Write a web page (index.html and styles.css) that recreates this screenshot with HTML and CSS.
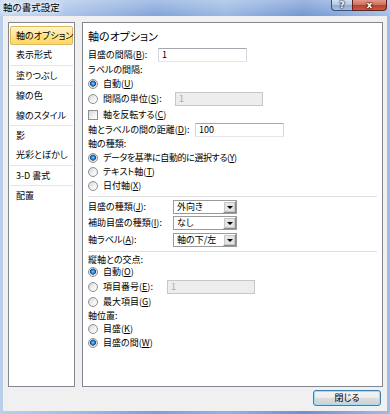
FILE: index.html
```html
<!DOCTYPE html>
<html lang="ja">
<head>
    <meta charset="UTF-8">
    <title>軸の書式設定</title>
    <link rel="stylesheet" href="styles.css">
</head>
<body>

<div class="window">
    <div class="titlebar">
        <span class="title">軸の書式設定</span>
        <div class="caption-buttons">
            <span class="cap-btn help">?</span>
            <span class="cap-btn close">x</span>
        </div>
    </div>

    <div class="client">
        <div class="panes">
            <ul class="nav">
                <li class="nav-item selected">軸のオプション</li>
                <li class="nav-item">表示形式</li>
                <li class="nav-sep"></li>
                <li class="nav-item">塗りつぶし</li>
                <li class="nav-sep"></li>
                <li class="nav-item">線の色</li>
                <li class="nav-item">線のスタイル</li>
                <li class="nav-sep"></li>
                <li class="nav-item">影</li>
                <li class="nav-item">光彩とぼかし</li>
                <li class="nav-sep"></li>
                <li class="nav-item">3-D 書式</li>
                <li class="nav-sep"></li>
                <li class="nav-item">配置</li>
            </ul>

            <div class="options">
                <div class="opt-title">軸のオプション</div>

                <div class="row">
                    <span class="lbl w-interval">目盛の間隔(<u>B</u>):</span>
                    <span class="textbox">1</span>
                </div>
                <div class="row">ラベルの間隔:</div>
                <div class="row"><span class="radio on"></span>自動(<u>U</u>)</div>
                <div class="row">
                    <span class="radio"></span>
                    <span class="lbl w-unit">間隔の単位(<u>S</u>):</span>
                    <span class="textbox disabled">1</span>
                </div>
                <div class="row"><span class="check"></span>軸を反転する(<u>C</u>)</div>
                <div class="row">
                    <span class="lbl w-distance">軸とラベルの間の距離(<u>D</u>):</span>
                    <span class="textbox">100</span>
                </div>
                <div class="row">軸の種類:</div>
                <div class="row"><span class="radio on"></span><span class="tight">データを基準に自動的に選択する(<u>Y</u>)</span></div>
                <div class="row"><span class="radio"></span>テキスト軸(<u>T</u>)</div>
                <div class="row"><span class="radio"></span>日付軸(<u>X</u>)</div>

                <div class="sep"></div>

                <div class="row">
                    <span class="lbl w-select">目盛の種類(<u>J</u>):</span>
                    <span class="combo"><span class="combo-text">外向き</span><span class="combo-btn"></span></span>
                </div>
                <div class="row">
                    <span class="lbl w-select">補助目盛の種類(<u>I</u>):</span>
                    <span class="combo"><span class="combo-text">なし</span><span class="combo-btn"></span></span>
                </div>
                <div class="row">
                    <span class="lbl w-select">軸ラベル(<u>A</u>):</span>
                    <span class="combo"><span class="combo-text">軸の下/左</span><span class="combo-btn"></span></span>
                </div>

                <div class="sep"></div>

                <div class="row">縦軸との交点:</div>
                <div class="row"><span class="radio on"></span>自動(<u>O</u>)</div>
                <div class="row">
                    <span class="radio"></span>
                    <span class="lbl w-cross">項目番号(<u>E</u>):</span>
                    <span class="textbox disabled">1</span>
                </div>
                <div class="row"><span class="radio"></span>最大項目(<u>G</u>)</div>
                <div class="row">軸位置:</div>
                <div class="row"><span class="radio"></span>目盛(<u>K</u>)</div>
                <div class="row"><span class="radio on"></span>目盛の間(<u>W</u>)</div>
            </div>
        </div>

        <div class="footer">
            <button class="btn-close">閉じる</button>
        </div>
    </div>
</div>

</body>
</html>
```
FILE: styles.css
```css
html, body {
    margin: 0;
    padding: 0;
    overflow: hidden;
}
body {
    font-family: "Noto Sans CJK JP", "Noto Sans", sans-serif;
    font-size: 9px;
    font-feature-settings: "palt";
    color: #000;
}
.window {
    width: 390px;
    height: 414px;
    display: flex;
    flex-direction: column;
    background: linear-gradient(90deg, #b9cfec 0%, #a3bee6 18%, #7b9fd8 40%, #94b3e1 58%, #6b91d0 78%, #a0bce6 100%);
}
.titlebar {
    height: 16px;
    display: flex;
    align-items: flex-start;
    padding: 0 3px 0 3px;
    background: linear-gradient(180deg, rgba(255,255,255,0.35), rgba(255,255,255,0.05));
}
.title {
    font-size: 9.5px;
    line-height: 15px;
    text-shadow: 0 0 4px #fff, 0 0 8px #fff, 0 0 10px #e6effa;
}
.caption-buttons {
    margin-left: auto;
    display: flex;
}
.cap-btn {
    height: 11px;
    box-sizing: border-box;
    display: flex;
    align-items: center;
    justify-content: center;
    font-family: "DejaVu Sans", sans-serif;
    font-weight: bold;
    line-height: 10px;
    color: #fff;
    border: 1px solid #3d5070;
    border-top: none;
}
.help {
    width: 21px;
    font-size: 9px;
    border-radius: 0 0 0 4px;
    border-right: none;
    background: linear-gradient(180deg, #d3e0f1 0%, #b4c8e6 50%, #8fabd6 51%, #a7bee2 100%);
    text-shadow: 0 0 1px #1d2f4a, 0 0 2px #1d2f4a, 0 0 2px #1d2f4a;
}
.close {
    width: 35px;
    font-size: 9px;
    border-radius: 0 0 4px 0;
    border-color: #5e231d;
    background: linear-gradient(180deg, #e39a8a 0%, #cf6d5d 50%, #b8412f 51%, #c95a45 100%);
    text-shadow: 0 0 1px #3f100b, 0 0 2px #3f100b, 0 0 2px #3f100b;
}

.client {
    flex: 1;
    margin: 0 3px 3px 3px;
    padding: 6px 4px 0 5px;
    background: #f0f0f0;
    display: flex;
    flex-direction: column;
}
.panes {
    height: 365px;
    display: flex;
    gap: 7px;
}

.nav {
    list-style: none;
    margin: 0;
    width: 67px;
    box-sizing: border-box;
    padding: 3px 1px 0 1px;
    border: 1px solid #828790;
    background: #fff;
}
.nav-item {
    height: 19.4px;
    line-height: 19.4px;
    padding-left: 6px;
    box-sizing: border-box;
    white-space: nowrap;
}
.nav-item.selected {
    border: 1px solid #ddb85e;
    border-radius: 2px;
    line-height: 17.4px;
    padding-left: 5px;
    background: linear-gradient(180deg, #fff6cf 0%, #ffe797 45%, #ffd75c 100%);
}
.nav-sep {
    height: 1px;
    background: #e6e6e6;
}

.options {
    flex: 1;
    border: 1px solid #828790;
    background: #fff;
    padding: 3px 5px 0 5px;
    display: grid;
    grid-template-rows: 21px 16px 14px 14px 16px 16px 14px 14px 13px 15px 14px 6px 15px 17px 17px 6px 11px 14px 16px 14px 13px 14px 14px;
    align-content: start;
}
.opt-title {
    font-size: 11px;
    line-height: 21px;
}
.row {
    display: flex;
    align-items: center;
    line-height: 12px;
    white-space: nowrap;
}
.row u {
    text-decoration-thickness: 1px;
    text-underline-offset: 1px;
}
.tight {
    letter-spacing: -0.4px;
}
.lbl {
    flex: none;
}
.w-interval { width: 70px; }
.w-unit { width: 72px; }
.w-distance { width: 107px; }
.w-select { width: 85px; }
.w-cross { width: 64px; }

.sep {
    align-self: center;
    height: 1px;
    background: #dedede;
}

.radio {
    flex: none;
    width: 10px;
    height: 10px;
    box-sizing: border-box;
    border-radius: 50%;
    border: 1px solid #8e8f8f;
    background: linear-gradient(135deg, #d4d4d4 0%, #f4f4f4 60%, #fff 100%);
    margin-right: 5px;
}
.radio.on {
    background: radial-gradient(circle at 50% 45%, #8fd2ff 0, #2c86d9 1.6px, #18497e 2.8px, #e2e2e2 3.3px, #fafafa 100%);
}
.check {
    flex: none;
    width: 10px;
    height: 10px;
    box-sizing: border-box;
    border: 1px solid #8e8f8f;
    background: linear-gradient(135deg, #d6d6d6 0%, #f6f6f6 70%, #fff 100%);
    margin-right: 5px;
}

.textbox {
    flex: none;
    width: 89px;
    height: 14px;
    box-sizing: border-box;
    border: 1px solid;
    border-color: #a3a7ae #d5d9e0 #e3e7ed #d5d9e0;
    background: #fff;
    padding-left: 3px;
    line-height: 12px;
}
.textbox.disabled {
    width: 88px;
    border-color: #c7c7c7;
    background: #ededed;
    color: #a8a8a8;
}

.combo {
    flex: none;
    width: 64px;
    height: 14px;
    box-sizing: border-box;
    border: 1px solid #9a9a9a;
    background: #fff;
    display: flex;
    align-items: stretch;
}
.combo-text {
    flex: 1;
    padding-left: 3px;
    line-height: 12px;
    overflow: hidden;
}
.combo-btn {
    width: 13px;
    box-sizing: border-box;
    border: 1px solid #8a8a8a;
    border-top-color: #fff;
    border-left-color: #fff;
    background: #e4e4e4;
    display: flex;
    align-items: center;
    justify-content: center;
    outline: 1px solid #c8c8c8;
    outline-offset: -2px;
}
.combo-btn::after {
    content: "";
    border-left: 3px solid transparent;
    border-right: 3px solid transparent;
    border-top: 3px solid #000;
    margin-top: 1px;
}

.footer {
    flex: 1;
    display: flex;
    justify-content: flex-end;
    align-items: flex-start;
    padding: 3px 2px 0 0;
}
.btn-close {
    width: 68px;
    height: 16px;
    padding: 0;
    font-family: inherit;
    font-size: 9px;
    font-feature-settings: "palt";
    line-height: 12px;
    border: 1px solid #3c7fb1;
    border-radius: 3px;
    box-shadow: inset 0 0 0 1px #9fdcf8;
    background: linear-gradient(180deg, #f4f4f4 0%, #ececec 48%, #dcdcdc 52%, #d0d0d0 100%);
    color: #000;
}
```
